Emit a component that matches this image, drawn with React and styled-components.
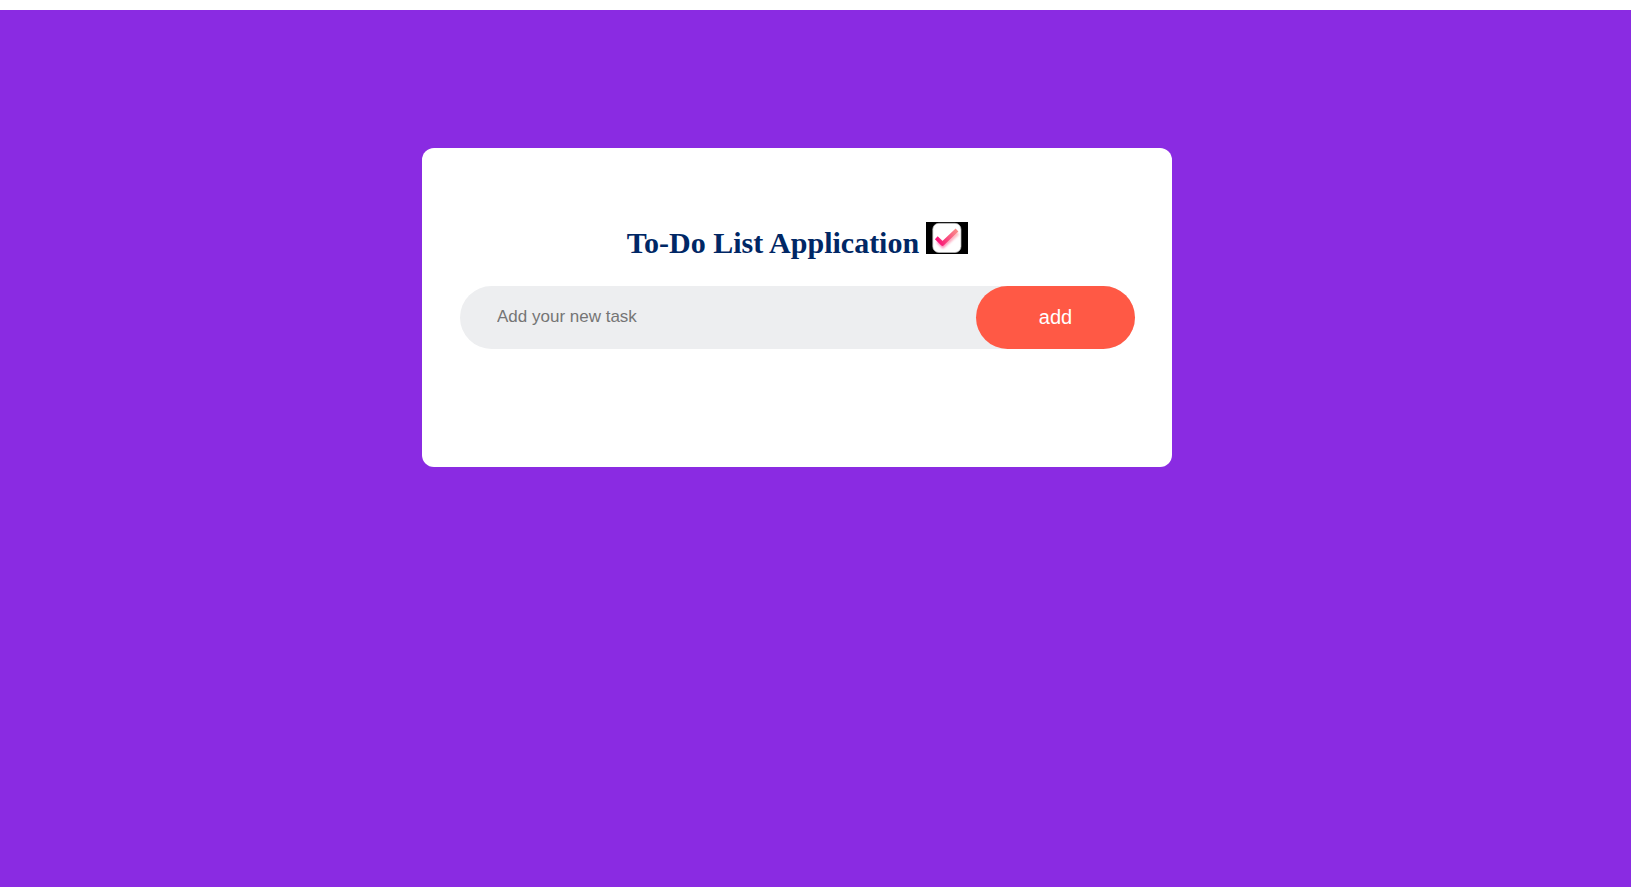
import React from "react";
import styled, { createGlobalStyle } from "styled-components";

const GlobalStyle = createGlobalStyle`
  * { box-sizing: border-box; margin: 0; padding: 0; }
  body { background: #8a2be2; font-family: "Liberation Serif", "Times New Roman", serif; }
`;

const Page = styled.main`
  min-height: 100vh;
  border-top: 10px solid #fff;
  padding: 138px 37px 20px 0;
  background: #8a2be2;
`;

const Card = styled.section`
  width: 100%;
  max-width: 750px;
  margin: 0 auto;
  padding: 72px 37px 118px 38px;
  border-radius: 12px;
  background: #fff;
`;

const Title = styled.h1`
  display: flex;
  justify-content: center;
  align-items: flex-start;
  gap: 7px;
  margin-bottom: 20px;
  color: #002765;
  font-size: 30px;
  line-height: 46px;
`;

const CheckIcon = styled.svg`
  width: 42px;
  height: 32px;
  margin-top: 2px;
`;

const TaskForm = styled.form`
  display: flex;
  border-radius: 32px;
  background: #edeef0;
`;

const TaskInput = styled.input`
  flex: 1;
  min-width: 0;
  padding: 0 37px 2px;
  border: none;
  outline: none;
  background: transparent;
  font: 17px "Liberation Sans", Arial, sans-serif;
  &::placeholder { color: #757575; }
`;

const AddButton = styled.button`
  width: 159px;
  height: 63px;
  border: none;
  border-radius: 32px;
  background: #ff5945;
  color: #fff;
  font: 20px "Liberation Sans", Arial, sans-serif;
  cursor: pointer;
`;

export default function App() {
  return (
    <>
      <GlobalStyle />
      <Page>
        <Card>
          <Title>
            To-Do List Application
            <CheckIcon viewBox="0 0 42 32" aria-hidden="true">
              <defs>
                <linearGradient id="tick" gradientUnits="userSpaceOnUse" x1="10" y1="20" x2="32" y2="8">
                  <stop offset="0" stopColor="#fb0a78" />
                  <stop offset="0.35" stopColor="#f93c7c" />
                  <stop offset="1" stopColor="#fa938a" />
                </linearGradient>
                <filter id="glow" x="-30%" y="-30%" width="160%" height="160%">
                  <feGaussianBlur stdDeviation="1.3" />
                </filter>
              </defs>
              <rect width="42" height="32" fill="#000" />
              <rect x="6.8" y="1.3" width="28.2" height="29.2" rx="6" fill="#fff" stroke="#b5b5b5" strokeWidth="0.7" />
              <g fill="none" stroke="url(#tick)">
                <path d="M12 19l5 5L32 11" strokeWidth="4" opacity="0.5" filter="url(#glow)" />
                <path d="M10.3 15.8l6.2 6L31 8" strokeWidth="4" strokeLinejoin="round" />
              </g>
            </CheckIcon>
          </Title>
          <TaskForm onSubmit={(e) => e.preventDefault()}>
            <TaskInput type="text" aria-label="New task" placeholder="Add your new task" />
            <AddButton type="submit">add</AddButton>
          </TaskForm>
        </Card>
      </Page>
    </>
  );
}
